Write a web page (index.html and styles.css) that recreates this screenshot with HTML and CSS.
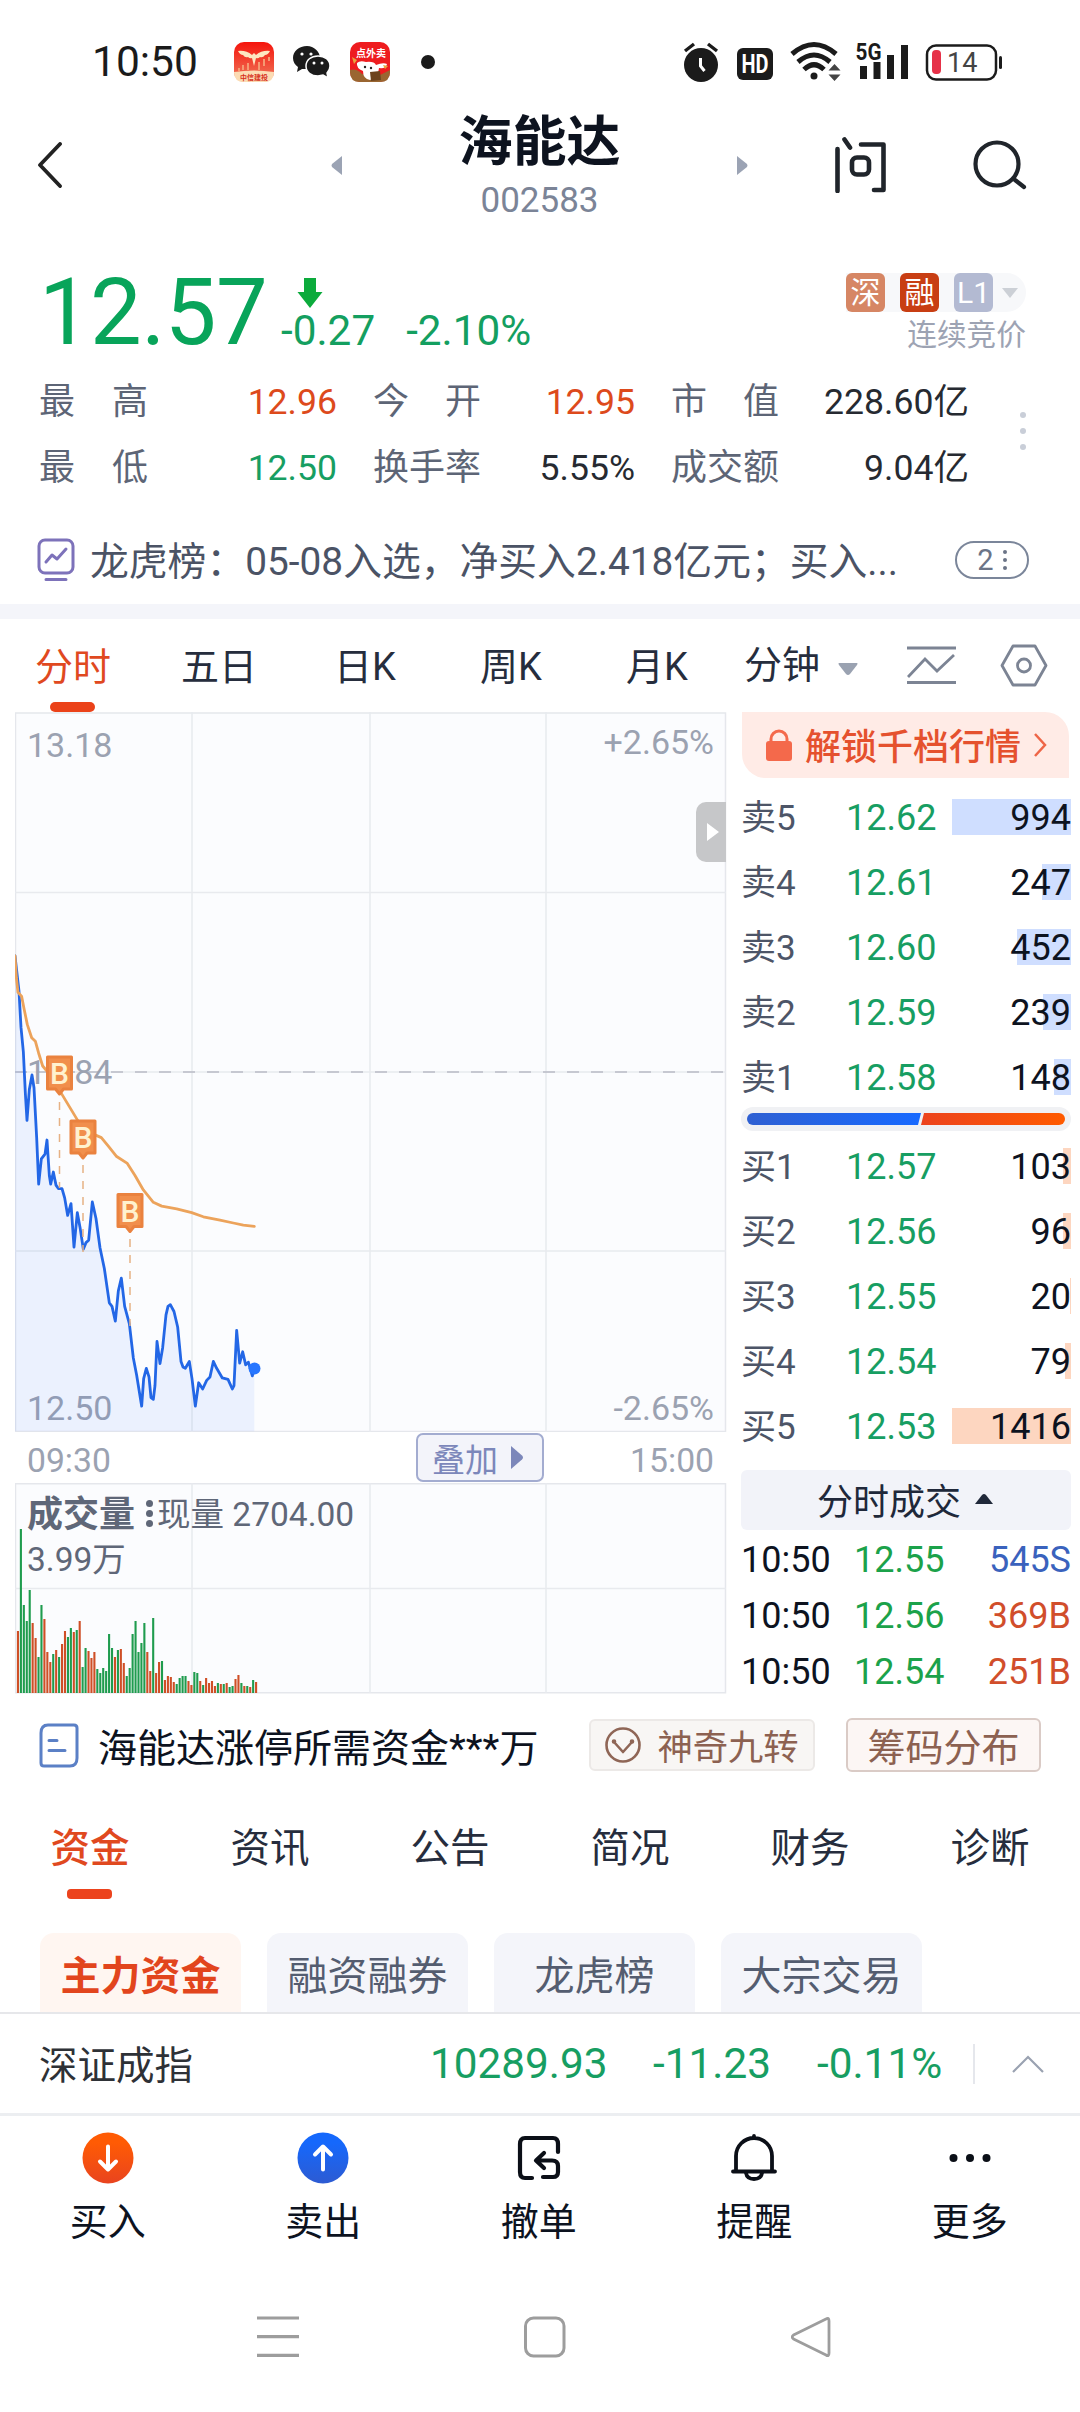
FILE: index.html
```html
<!DOCTYPE html>
<html lang="zh-CN">

<head>
    <meta charset="UTF-8">
    <meta name="viewport" content="width=device-width, initial-scale=1.0">
    <title>海能达 002583</title>

    <link rel="stylesheet" href="styles.css">
</head>

<body>
    <div class="app">

        <!-- Status bar -->
        <div class="status-bar">
            <div class="clock">10:50</div>
            <svg class="app-icon" width="40" height="40" viewBox="0 0 40 40">
                <defs>
                    <linearGradient id="redFade" x1="0" y1="0" x2="0" y2="1">
                        <stop offset="0" stop-color="#f5140c"/>
                        <stop offset="1" stop-color="#ee7b5d"/>
                    </linearGradient>
                </defs>
                <rect width="40" height="40" rx="10" fill="url(#redFade)"/>
                <path d="M0 30Q20 27 40 30Q40 40 30 40H10Q0 40 0 30Z" fill="#fbdcb4"/>
                <path d="M4 9Q12 8 18 13L20 11L22 13Q28 8 36 9Q34 13 31 13Q29 16 26 15Q24 17 22 16L20 24L18 16Q16 17 14 15Q11 16 9 13Q6 13 4 9Z" fill="#fde7c2"/>
                <path d="M5 26v3M9 23v5M14 21v7M25 20v8M30 17v7M35 15v4" stroke="#f59a72" stroke-width="2"/>
                <text x="20" y="37.5" font-size="7" font-weight="700" fill="#d7301c" text-anchor="middle">中信建投</text>
            </svg>
            <svg class="app-icon" width="38" height="32" viewBox="0 0 38 32">
                <path d="M14 0C6 0 0 5 0 12c0 4 2 7 5 9l-1 5 5-3h5C21 23 27 18 27 12S21 0 14 0z" fill="#1b1b1b"/>
                <path d="M25 10c-7 0-12 4-12 10s5 10 12 10l5-1 5 3-1-5c2-2 3-4 3-7 0-6-5-10-12-10z" fill="#1b1b1b" stroke="#fff" stroke-width="1.5"/>
                <circle cx="9" cy="8" r="1.6" fill="#fff"/><circle cx="18" cy="8" r="1.6" fill="#fff"/>
                <circle cx="21" cy="17" r="1.5" fill="#fff"/><circle cx="29" cy="17" r="1.5" fill="#fff"/>
            </svg>
            <svg class="app-icon" width="40" height="40" viewBox="0 0 40 40">
                <rect width="40" height="40" rx="10" fill="#ee1c1f"/>
                <path d="M0 28Q7 26 12 32L28 34L40 28V30Q40 40 30 40H10Q0 40 0 30Z" fill="#9a6631"/>
                <path d="M7 21Q10 18 16 20Q24 19 26 23Q33 20 37 22Q36 27 29 26Q28 37 20 38Q13 37 13 29Q6 26 7 21Z" fill="#fff"/>
                <path d="M20 30l10-1 1 9-10 1z" fill="#6d431e"/>
                <path d="M2 15l5 3-3 4M33 23l5 1-3 3" fill="#e9a23c"/>
                <circle cx="15" cy="25" r="1.2" fill="#222"/><circle cx="21" cy="26" r="1.2" fill="#222"/>
                <text x="21" y="15" font-size="10" font-weight="700" fill="#fff" text-anchor="middle">点外卖</text>
            </svg>
            <div class="dot"></div>
            <svg class="status-right" width="330" height="44" viewBox="0 0 330 44">
                <!-- alarm -->
                <circle cx="18" cy="25" r="17" fill="#1b1b1b"/>
                <path d="M2 11L11 4M34 11L25 4" stroke="#1b1b1b" stroke-width="3.4"/>
                <path d="M17.5 18v8l4 5" fill="none" stroke="#fff" stroke-width="3"/>
                <!-- HD -->
                <rect x="54" y="8" width="36" height="32" rx="6" fill="#1b1b1b"/>
                <text x="72" y="33" font-size="25" font-weight="700" fill="#fff" text-anchor="middle" textLength="27" lengthAdjust="spacingAndGlyphs">HD</text>
                <!-- wifi -->
                <g fill="none" stroke="#1b1b1b" stroke-width="5">
                    <path d="M109 14Q131-5 153 14"/>
                    <path d="M115 22Q131 8 147 22"/>
                    <path d="M121 29.5Q131 20 141 29.5"/>
                </g>
                <circle cx="131" cy="36" r="3.5" fill="#1b1b1b"/>
                <path d="M145.5 30.500L151.500 24L157.500 30.500ZM145.500 34.500L151.500 41L157.500 34.500Z" fill="#444"/>
                <!-- signal -->
                <path d="M177 26h7v13h-7zM190.500 22h7v17h-7zM204 15h7v24h-7zM218 5h7v34h-7z" fill="#1b1b1b"/>
                <text x="172.500" y="20" font-size="23.500" font-weight="700" fill="#1b1b1b" textLength="26" lengthAdjust="spacingAndGlyphs">5G</text>
                <!-- battery -->
                <rect x="244" y="5.500" width="69" height="34" rx="9" fill="none" stroke="#1b1b1b" stroke-width="2.500"/>
                <rect x="316" y="16" width="3" height="13" rx="1.500" fill="#1b1b1b"/>
                <rect x="249" y="10" width="9" height="24" rx="4" fill="#e63148"/>
                <text x="264" y="32" font-size="27" fill="#444">14</text>
            </svg>
        </div>

        <!-- Stock title -->
        <div class="header">
            <svg class="back" width="26" height="46" viewBox="0 0 26 46"><path d="M23 2L3 23L23 44" fill="none" stroke="#222" stroke-width="3.8" stroke-linecap="round" stroke-linejoin="round"/></svg>
            <svg class="prev" width="11" height="19" viewBox="0 0 11 19"><path d="M11 0v19L1 11Q0 9.500 1 8z" fill="#9ba3b4"/></svg>
            <div class="title">
                <div class="name">海能达</div>
                <div class="code">002583</div>
            </div>
            <svg class="next" width="11" height="19" viewBox="0 0 11 19"><path d="M0 0v19L10 11Q11 9.500 10 8z" fill="#9ba3b4"/></svg>
            <svg class="ask" width="52" height="56" viewBox="0 0 52 56" fill="none" stroke="#20252b" stroke-width="4.600" stroke-linecap="round" stroke-linejoin="round">
                <path d="M2.500 12v42M9.500 2.500l5.500 8M26 7.500h22.500v45.500H39"/>
                <rect x="17" y="20.500" width="17" height="17" rx="5"/>
            </svg>
            <svg class="search" width="54" height="50" viewBox="0 0 54 50" fill="none" stroke="#20252b" stroke-width="4.200" stroke-linecap="round">
                <circle cx="24" cy="24" r="21.500"/><path d="M42 40L51 47"/>
            </svg>
        </div>

        <!-- Price -->
        <div class="quote">
            <div class="price">12.57</div>
            <div class="change">
                <svg width="26" height="32" viewBox="0 0 26 32"><path d="M7 1h12v14h6.500L13 31L.5 15H7z" fill="#0cab3c"/></svg>
                <div class="change-values"><span>-0.27</span><span>-2.10%</span></div>
            </div>
            <div class="market">
                <div class="tags">
                    <span class="tag tag-sz">深</span>
                    <span class="tag tag-rz">融</span>
                    <span class="tag tag-l1">L1</span>
                    <svg width="16" height="10" viewBox="0 0 16 10"><path d="M0 0h16L8 10z" fill="#ccd0d6"/></svg>
                </div>
                <div class="phase">连续竞价</div>
            </div>
        </div>

        <div class="stats">
            <div class="label"><span>最</span><span>高</span></div><div class="value red">12.96</div>
            <div class="label"><span>今</span><span>开</span></div><div class="value red">12.95</div>
            <div class="label"><span>市</span><span>值</span></div><div class="value">228.60亿</div>
            <div class="label"><span>最</span><span>低</span></div><div class="value green">12.50</div>
            <div class="label"><span>换</span><span>手</span><span>率</span></div><div class="value">5.55%</div>
            <div class="label"><span>成</span><span>交</span><span>额</span></div><div class="value">9.04亿</div>
            <div class="more-dots"><i></i><i></i><i></i></div>
        </div>

        <div class="notice">
            <svg width="38" height="44" viewBox="0 0 38 44" fill="none" stroke="#7d72ba" stroke-width="3" stroke-linecap="round" stroke-linejoin="round">
                <rect x="2" y="2" width="34" height="33" rx="6"/>
                <path d="M9 24L15 17L20 21L29 11M9 41.500h20"/>
            </svg>
            <div class="notice-text">龙虎榜：05-08入选，净买入2.418亿元；买入...</div>
            <div class="notice-count">2<span class="mini-dots"><i></i><i></i><i></i></span></div>
        </div>

        <div class="gap"></div>

        <!-- Period tabs -->
        <div class="periods">
            <div class="period active">分时</div>
            <div class="period">五日</div>
            <div class="period">日K</div>
            <div class="period">周K</div>
            <div class="period">月K</div>
            <div class="period minute">分钟<svg width="20" height="12" viewBox="0 0 20 12"><path d="M1 0h18q1 0 0 2l-7 9q-2 2-4 0L1 2Q0 0 1 0z" fill="#9aa2b1"/></svg></div>
            <svg class="line-icon" width="49" height="39" viewBox="0 0 49 39" fill="none" stroke="#7c8494" stroke-width="2.800"><path d="M0 2h49M0 36.500h49M1 31L18 13L30 25L47 9"/></svg>
            <svg class="hex-icon" width="48" height="43" viewBox="0 0 48 43" fill="none" stroke="#7c8494" stroke-width="2.800" stroke-linejoin="round"><path d="M13 2h22L46 21.500L35 41H13L2 21.500z"/><circle cx="24" cy="21.500" r="6.500"/></svg>
        </div>

        <div class="trading">
            <div class="charts">
                <!-- Minute chart -->
                <div class="price-chart">
                    <svg width="712" height="720" viewBox="0 0 712 720">
                        <rect x="0.500" y="1" width="710" height="718.500" fill="#fbfcfe" stroke="#e5e7ec" stroke-width="1.500"/>
                        <path d="M177 0V720M355 0V720M531 0V720M0 180.500H711M0 360H711M0 539H711" stroke="#e8eaee" stroke-width="1.500"/>
                        <path d="M0 360H711" stroke="#b9bcc6" stroke-width="1.500" stroke-dasharray="12 12"/>
                        <g class="chart-text">
                            <text x="12" y="45">13.18</text>
                            <text x="699" y="42" text-anchor="end">+2.65%</text>
                            <text x="12" y="372">12.84</text>
                            <text x="12" y="708">12.50</text>
                            <text x="699" y="708" text-anchor="end">-2.65%</text>
                        </g>
                        <g id="lines" transform="translate(-15 188) scale(.33333 .34435)"></g>
                        <circle cx="239.500" cy="656.500" r="6" fill="#2776ff"/>
                        <path d="M44.500 390V476M68 453V540M115 527V614" stroke="#e6b184" stroke-width="1.500" stroke-dasharray="8 8"/>
                        <g id="markers"></g>
                    </svg>
                    <div class="expand"><svg width="12" height="18" viewBox="0 0 12 18"><path d="M0 0L12 9L0 18z" fill="#fff"/></svg></div>
                </div>

                <div class="time-axis">
                    <span>09:30</span>
                    <div class="overlay-btn">叠加<svg width="12" height="23" viewBox="0 0 12 23"><path d="M0 0L11 9.500Q13 11.500 11 13.500L0 23z" fill="#7c87ba"/></svg></div>
                    <span>15:00</span>
                </div>

                <!-- Volume chart -->
                <div class="volume-chart">
                    <svg width="712" height="211" viewBox="0 0 712 211">
                        <rect x="0.500" y="0.750" width="710" height="209" fill="#fbfcfe" stroke="#e5e7ec" stroke-width="1.500"/>
                        <path d="M177 0V210M355 0V210M531 0V210M0 105.500H711" stroke="#e8eaee" stroke-width="1.500"/>
                        <g id="volume"></g>
                    </svg>
                    <div class="volume-legend">
                        <div class="volume-now"><b>成交量</b><span class="mini-dots bold"><i></i><i></i><i></i></span>现量 2704.00</div>
                        <div>3.99万</div>
                    </div>
                </div>
            </div>

            <!-- Order book -->
            <div class="book">
                <div class="unlock">
                    <svg width="26" height="33" viewBox="0 0 26 33"><path d="M5 15V10a8 8 0 0 1 16 0v5" fill="none" stroke="#f4694b" stroke-width="3"/><rect y="12" width="26" height="20" rx="3" fill="#f4694b"/></svg>
                    <span>解锁千档行情</span>
                    <svg width="14" height="24" viewBox="0 0 14 24"><path d="M2 1L12 12L2 23" fill="none" stroke="#ee6547" stroke-width="2.500"/></svg>
                </div>

                <div class="levels asks">
                    <div class="level"><span>卖5</span><span class="lv-price">12.62</span><span class="lv-vol"><i style="width:119px"></i>994</span></div>
                    <div class="level"><span>卖4</span><span class="lv-price">12.61</span><span class="lv-vol"><i style="width:29px"></i>247</span></div>
                    <div class="level"><span>卖3</span><span class="lv-price">12.60</span><span class="lv-vol"><i style="width:54px"></i>452</span></div>
                    <div class="level"><span>卖2</span><span class="lv-price">12.59</span><span class="lv-vol"><i style="width:28px"></i>239</span></div>
                    <div class="level"><span>卖1</span><span class="lv-price">12.58</span><span class="lv-vol"><i style="width:17px"></i>148</span></div>
                </div>

                <div class="ratio">
                    <svg width="318" height="12" viewBox="0 0 318 12">
                        <defs>
                            <linearGradient id="blueBar"><stop offset="0" stop-color="#2f60d2"/><stop offset="1" stop-color="#1769ff"/></linearGradient>
                            <linearGradient id="redBar"><stop offset="0" stop-color="#ec431d"/><stop offset="1" stop-color="#ff5b00"/></linearGradient>
                        </defs>
                        <path d="M6 0H174L171 12H6A6 6 0 0 1 6 0Z" fill="url(#blueBar)"/>
                        <path d="M177 0H312A6 6 0 0 1 312 12H174Z" fill="url(#redBar)"/>
                    </svg>
                </div>

                <div class="levels bids">
                    <div class="level"><span>买1</span><span class="lv-price">12.57</span><span class="lv-vol"><i style="width:8px"></i>103</span></div>
                    <div class="level"><span>买2</span><span class="lv-price">12.56</span><span class="lv-vol"><i style="width:8px"></i>96</span></div>
                    <div class="level"><span>买3</span><span class="lv-price">12.55</span><span class="lv-vol"><i style="width:1px"></i>20</span></div>
                    <div class="level"><span>买4</span><span class="lv-price">12.54</span><span class="lv-vol"><i style="width:6px"></i>79</span></div>
                    <div class="level"><span>买5</span><span class="lv-price">12.53</span><span class="lv-vol"><i style="width:119px"></i>1416</span></div>
                </div>

                <div class="deals-title">分时成交<svg width="18" height="10" viewBox="0 0 18 10"><path d="M0 10L7 1Q9-1 11 1L18 10z" fill="#20283a"/></svg></div>
                <div class="deal"><span>10:50</span><span class="deal-price">12.55</span><span class="deal-vol sell">545S</span></div>
                <div class="deal"><span>10:50</span><span class="deal-price">12.56</span><span class="deal-vol buy">369B</span></div>
                <div class="deal"><span>10:50</span><span class="deal-price">12.54</span><span class="deal-vol buy">251B</span></div>
            </div>
        </div>

        <div class="tips">
            <svg width="40" height="45" viewBox="0 0 40 45" fill="none" stroke="#5b80c6" stroke-width="3" stroke-linecap="round">
                <path d="M9 2H35Q38 2 38 5V35Q38 43 31 43H5Q2 43 2 40V10Q2 2 9 2Z"/><path d="M10 17.500h8M10 27.500h16"/>
            </svg>
            <div class="tips-text">海能达涨停所需资金***万</div>
            <div class="tool magic">
                <svg width="36" height="36" viewBox="0 0 36 36" fill="none" stroke="#8f6656" stroke-width="2.600" stroke-linecap="round" stroke-linejoin="round"><circle cx="18" cy="18" r="16.500"/><path d="M9 15L18 25L27 15"/><circle cx="9" cy="14.500" r="1"/><circle cx="27" cy="14.500" r="1"/></svg>
                <span>神奇九转</span>
            </div>
            <div class="tool chips-dist"><span>筹码分布</span></div>
        </div>

        <div class="sections">
            <div class="section active">资金</div>
            <div class="section">资讯</div>
            <div class="section">公告</div>
            <div class="section">简况</div>
            <div class="section">财务</div>
            <div class="section">诊断</div>
        </div>

        <div class="chips">
            <div class="chip active">主力资金</div>
            <div class="chip">融资融券</div>
            <div class="chip">龙虎榜</div>
            <div class="chip">大宗交易</div>
        </div>

        <div class="index-bar">
            <div class="index-name">深证成指</div>
            <div class="index-last">10289.93</div>
            <div class="index-diff">-11.23</div>
            <div class="index-rate">-0.11%</div>
            <div class="index-line"></div>
            <svg width="32" height="18" viewBox="0 0 32 18"><path d="M1 17L16 2L31 17" fill="none" stroke="#9aa2b1" stroke-width="2.200"/></svg>
        </div>

        <div class="actions">
            <div class="action">
                <svg width="52" height="52" viewBox="0 0 52 52"><defs><linearGradient id="buyFill" x1="0" y1="0" x2="0" y2="1"><stop offset=".2" stop-color="#ff5b04"/><stop offset="1" stop-color="#e9441f"/></linearGradient></defs><circle cx="26" cy="26" r="25.500" fill="url(#buyFill)"/><path d="M26 14.500V37M18 29.500L26 37.500L34 29.500" fill="none" stroke="#fff" stroke-width="4" stroke-linecap="round" stroke-linejoin="round"/></svg>
                买入
            </div>
            <div class="action">
                <svg width="52" height="52" viewBox="0 0 52 52"><defs><linearGradient id="sellFill" x1="0" y1="0" x2="0" y2="1"><stop offset=".2" stop-color="#1568fc"/><stop offset="1" stop-color="#2d5bd2"/></linearGradient></defs><circle cx="26" cy="26" r="25.500" fill="url(#sellFill)"/><path d="M26 37.500V15M18 22.500L26 14.500L34 22.500" fill="none" stroke="#fff" stroke-width="4" stroke-linecap="round" stroke-linejoin="round"/></svg>
                卖出
            </div>
            <div class="action">
                <svg width="52" height="52" viewBox="0 0 52 52" fill="none" stroke="#0b0f17" stroke-width="4.200" stroke-linecap="round" stroke-linejoin="round"><path d="M19 46H12Q7 46 7 40V12Q7 6 12 6H40Q45 6 45 12V20M31 21L23 28.500L31 36M24 28.500H39Q45 28.500 45 34V40Q45 45 40 45H30"/></svg>
                撤单
            </div>
            <div class="action">
                <svg width="52" height="52" viewBox="0 0 52 52" fill="none" stroke="#0b0f17" stroke-width="3.800" stroke-linecap="round"><path d="M8 38V24A18 18 0 0 1 44 24V38M5 39.500H47M26 4V6"/><path d="M18 41Q19 47 26 47T34 41"/></svg>
                提醒
            </div>
            <div class="action">
                <svg width="52" height="52" viewBox="0 0 52 52" fill="#0b0f17"><circle cx="9.500" cy="26" r="4"/><circle cx="26" cy="26" r="4"/><circle cx="42.500" cy="26" r="4"/></svg>
                更多
            </div>
        </div>

        <div class="nav-bar">
            <svg width="42" height="42" viewBox="0 0 42 42" stroke="#9d9d9d" stroke-width="3.200"><path d="M0 2h42M0 20.700h42M0 39.300h42"/></svg>
            <svg width="42" height="42" viewBox="0 0 42 42" fill="none" stroke="#9d9d9d" stroke-width="3"><rect x="1.500" y="2" width="38.500" height="38" rx="8"/></svg>
            <svg width="42" height="42" viewBox="0 0 42 42" fill="none" stroke="#9d9d9d" stroke-width="2.800" stroke-linejoin="round"><path d="M35 3Q38 1 38 5V37Q38 41 35 39L2.500 23Q0 21 2.500 19Z"/></svg>
        </div>
    </div>

    <script>

// minute prices
const price = "45,162 50,205 57,265 63,370 70,440 76,560 81,640 88,550 96,508 102,545 110,690 116,825 124,752 135,738 141,697 148,800 152,825 160,790 168,828 175,838 186,838 194,865 203,916 213,882 222,1008 232,908 240,950 250,1014 258,995 266,988 277,877 288,925 300,1010 313,1070 328,1170 336,1180 346,1223 355,1135 364,1098 374,1180 388,1230 400,1330 410,1380 425,1470 431,1390 439,1360 447,1385 453,1445 460,1450 465,1410 471,1282 480,1346 488,1300 498,1205 504,1180 511,1175 522,1195 533,1240 543,1340 549,1356 556,1360 568,1340 576,1390 586,1470 596,1402 608,1420 620,1395 630,1385 640,1340 650,1360 667,1388 684,1392 697,1420 702,1410 710,1250 719,1345 728,1312 737,1350 745,1342 757,1382 763,1360";

// average price
const average = "45,162 49,225 54,268 65,280 72,315 82,362 95,400 106,410 116,445 128,482 142,498 180,555 233,640 260,675 285,682 304,690 325,715 350,745 382,765 405,800 430,842 460,878 485,889 530,897 575,908 610,920 660,930 700,938 730,944 763,948";

document.getElementById('lines').innerHTML =
    `<polygon points="${price} 763,1543 45,1543" fill="#1769ff" fill-opacity="0.07"/>
     <polyline class="line" points="${price}" stroke="#2367e6"/>
     <polyline class="line" points="${average}" stroke="#eca35b"/>`;

// buy marks on the chart
const marks = [[44.5, 361], [68, 425], [115, 498.5]];

document.getElementById('markers').innerHTML = marks.map(([x, y]) =>
    `<path d="M${x - 12} ${y - 16}h24v32h-8l-4 5l-4-5h-8z" fill="#f18f4c" stroke="#ea823f" stroke-width="3" stroke-linejoin="round"/>
     <text class="mark" x="${x}" y="${y + 11}">B</text>`).join('');

// volume per minute, r = up, g = down
const volume = "62r 164g 88g 72g 103g 70r 55r 36g 88g 74r 41r 31r 39g 43r 36g 49r 62r 56g 65g 61r 63g 72r 26g 45g 42r 35r 41r 24g 20g 25g 22g 59g 45g 36r 43g 44r 30r 17g 25g 59g 72g 41g 50g 70g 41r 22r 75g 20r 31r 32g 13r 17r 16r 11r 9g 15g 17g 17g 12r 8r 21g 20g 12r 8g 15r 10r 12r 7r 10g 9r 9g 10r 6g 7g 14r 18r 10g 7r 7g 6r 13g 11r";

document.getElementById('volume').innerHTML = volume.split(' ').map((v, i) => {
    const h = parseInt(v);
    const color = v.endsWith('r') ? '#cf4f26' : '#1f9c4e';
    return `<rect x="${(1.9 + i * 2.94).toFixed(2)}" y="${210 - h}" width="2.1" height="${h}" fill="${color}"/>`;
}).join('');

    </script>
</body>

</html>
```
FILE: styles.css
```css
* {
    margin: 0;
    padding: 0;
    box-sizing: border-box;
}

body {
    width: 1080px;
    background-color: #fff;
    color: #0d131f;
    font-family: Roboto, "Noto Sans CJK SC", sans-serif;
}

svg {
    display: block;
    flex-shrink: 0;
}

.app {
    width: 1080px;
    height: 2412px;
    overflow: hidden;
}

/* status bar */
.status-bar {
    display: flex;
    align-items: center;
    height: 110px;
    padding: 13px 66px 0 92px;
}

.clock {
    width: 142px;
    font-size: 42.5px;
    color: #1b1b1b;
}

.app-icon {
    margin-right: 19px;
}

.dot {
    width: 14px;
    height: 14px;
    margin-left: 12px;
    border-radius: 50%;
    background-color: #1b1b1b;
}

.status-right {
    margin-left: auto;
    margin-right: 1px;
}

/* header */
.header {
    display: flex;
    align-items: center;
    height: 130px;
    padding: 0 53px 20px 37px;
}

.prev {
    margin-left: 268px;
}

.title {
    width: 395px;
    padding-top: 5px;
    text-align: center;
}

.name {
    font-size: 54px;
    font-weight: 700;
    line-height: 58px;
}

.code {
    font-size: 35px;
    line-height: 40px;
    margin-top: 9px;
    color: #7b8497;
}

.ask {
    margin-left: 87px;
}

.search {
    margin-left: auto;
}

/* price */
.quote {
    display: flex;
    height: 132px;
    padding: 0 54px 0 39px;
}

.price {
    width: 242px;
    padding-top: 19px;
    font-size: 92px;
    line-height: 108px;
    letter-spacing: -0.6px;
    color: #08a45a;
}

.change {
    padding-top: 37px;
    color: #149f60;
}

.change svg {
    margin-left: 16px;
}

.change-values {
    display: flex;
    gap: 31px;
    font-size: 42.3px;
    line-height: 44px;
}

.market {
    margin-left: auto;
    padding-top: 33px;
}

.tags {
    display: flex;
    align-items: center;
    width: 180px;
    height: 39px;
    gap: 15px;
    border-radius: 0 20px 20px 0;
    background-color: #f7f8fa;
}

.tags svg {
    margin-left: -6px;
}

.tag {
    width: 39px;
    height: 39px;
    border-radius: 6px;
    font-size: 30px;
    line-height: 39px;
    text-align: center;
    color: #fff;
}

.tag-sz {
    background-color: #d68664;
}

.tag-rz {
    background-color: #c83e13;
}

.tag-l1 {
    background-color: #b3bad2;
}

.phase {
    font-size: 29.7px;
    line-height: 46px;
    text-align: right;
    color: #9da3b3;
}

.stats {
    position: relative;
    display: grid;
    grid-template-columns: 109px 189px 36px 108px 154px 36px 108px 190px;
    grid-auto-rows: 66px;
    height: 147px;
    padding-left: 39px;
    font-size: 36px;
    line-height: 61px;
}

.label {
    display: flex;
    justify-content: space-between;
    color: #5d6576;
}

/* the label/value pairs sit in columns 1-2, 4-5 and 7-8 */
.label:nth-of-type(6n + 3) {
    grid-column: 4;
}

.label:nth-of-type(6n + 5) {
    grid-column: 7;
}

.value {
    text-align: right;
    font-size: 35.6px;
    line-height: 60px;
    color: #262a31;
}

.value.red {
    color: #dd4a1c;
}

.value.green {
    color: #179e62;
}

.more-dots {
    position: absolute;
    top: 40px;
    left: 1020px;
    display: flex;
    flex-direction: column;
    gap: 10px;
}

.more-dots i {
    width: 6px;
    height: 6px;
    border-radius: 50%;
    background-color: #c9ced8;
}

.notice {
    display: flex;
    align-items: center;
    height: 85px;
    padding: 0 51px 4px 37px;
}

.notice-text {
    margin-left: 15px;
    padding-bottom: 4px;
    font-size: 38.8px;
    white-space: nowrap;
    color: #4b5365;
}

.notice-count {
    display: flex;
    align-items: center;
    justify-content: center;
    gap: 9px;
    width: 74px;
    height: 38px;
    margin-left: auto;
    border: 2.5px solid #7b869a;
    border-radius: 19px;
    font-size: 29px;
    color: #6b7487;
}

.mini-dots {
    display: flex;
    flex-direction: column;
    gap: 4px;
}

.mini-dots i {
    width: 4px;
    height: 4px;
    border-radius: 50%;
    background-color: #6b7487;
}

.mini-dots.bold {
    gap: 3px;
    margin: 0 4px 0 11px;
    padding-bottom: 3px;
}

.mini-dots.bold i {
    width: 7px;
    height: 7px;
    background-color: #5f6778;
}

.gap {
    height: 15px;
    background-color: #f4f5fa;
}

/* period tabs */
.periods {
    display: flex;
    height: 93px;
    padding-right: 32px;
    font-size: 38px;
    line-height: 97px;
    color: #262d3d;
}

.period {
    position: relative;
    width: 146px;
    text-align: center;
}

.period.active {
    color: #e0491f;
}

.period.active::after {
    content: "";
    position: absolute;
    left: 50px;
    bottom: 0;
    width: 45px;
    height: 10px;
    border-radius: 5px;
    background-color: #eb4219;
}

.period.minute {
    display: flex;
    align-items: center;
    width: 162px;
    padding-left: 14px;
    gap: 18px;
}

.period.minute svg {
    margin-top: 7px;
}

.line-icon {
    margin: 27px 0 0 15px;
}

.hex-icon {
    margin: 25px 0 0 auto;
}

/* charts */
.trading {
    display: flex;
    height: 982px;
    padding-left: 15px;
}

.charts {
    width: 712px;
}

.price-chart {
    position: relative;
    height: 720px;
}

.chart-text {
    font-size: 34px;
    fill: #9ba2b1;
}

.line {
    fill: none;
    stroke-width: 2.8px;
    stroke-linejoin: round;
    stroke-linecap: round;
    vector-effect: non-scaling-stroke;
}

.mark {
    font-size: 30px;
    font-weight: 500;
    text-anchor: middle;
    fill: #fff2cf;
}

.expand {
    position: absolute;
    top: 90px;
    right: 1px;
    display: flex;
    align-items: center;
    justify-content: center;
    width: 30px;
    height: 60px;
    padding-left: 4px;
    border-radius: 10px 0 0 10px;
    background-color: #c6c7c9;
}

.time-axis {
    display: flex;
    align-items: center;
    height: 51px;
    padding: 0 13px 0 12px;
    font-size: 33.7px;
    color: #9ba2b1;
}

.time-axis span {
    padding-top: 5px;
}

.overlay-btn {
    display: flex;
    align-items: center;
    gap: 13px;
    width: 128px;
    height: 49px;
    margin: 0 86px 0 auto;
    padding-left: 14px;
    border: 2px solid #a3acd0;
    border-radius: 7px;
    font-size: 33px;
    color: #7c87ba;
    background-color: #f3f4fa;
}

.volume-chart {
    position: relative;
    height: 211px;
}

.volume-legend {
    position: absolute;
    top: 9px;
    left: 12px;
    font-size: 33.5px;
    line-height: 44px;
    color: #5f6778;
}

.volume-now {
    display: flex;
    align-items: center;
    height: 46px;
}

.volume-now b {
    font-size: 36px;
}

/* order book */
.book {
    width: 330px;
    margin-left: 14px;
}

.unlock {
    display: flex;
    align-items: center;
    height: 66px;
    margin: 0 2px 0 1px;
    padding-left: 24px;
    border-radius: 0 24px 0 24px;
    font-size: 36px;
    font-weight: 500;
    color: #e5512e;
    background-color: #ffebe6;
}

.unlock span {
    margin: 0 12px 2px 13px;
}

.levels {
    font-size: 36px;
    line-height: 39px;
}

.asks {
    padding-top: 21px;
}

.bids {
    padding-top: 17px;
}

.level {
    display: flex;
    height: 65px;
    color: #4d5567;
}

.level span:first-child {
    width: 105px;
    font-size: 35px;
}

.level .lv-price {
    color: #179e62;
}

.lv-vol {
    position: relative;
    z-index: 0;
    flex: 1;
    text-align: right;
    color: #0d131f;
}

.lv-vol i {
    position: absolute;
    z-index: -1;
    top: 0;
    right: 0;
    height: 36px;
    background-color: #cfdeff;
}

.bids .lv-vol i {
    background-color: #fdd6c0;
}

.ratio {
    height: 24px;
    margin-top: -17px;
    padding: 6px;
    border-radius: 12px;
    background-color: #f0f1f4;
}

.deals-title {
    display: flex;
    align-items: center;
    justify-content: center;
    gap: 14px;
    height: 60px;
    margin: -3px 0 2px;
    padding: 0 2px 2px 0;
    border-radius: 6px;
    font-size: 36px;
    color: #20283a;
    background-color: #f2f3f9;
}

.deal {
    display: flex;
    height: 56px;
    font-size: 36px;
    line-height: 56px;
}

.deal span:first-child {
    width: 113px;
}

.deal-price {
    color: #1ba24a;
}

.deal-vol {
    margin-left: auto;
}

.sell {
    color: #3a62bd;
}

.buy {
    color: #d14e2b;
}

/* tips row */
.tips {
    display: flex;
    align-items: center;
    height: 104px;
    padding: 0 39px 2px 39px;
}

.tips-text {
    margin-left: 19px;
    font-size: 39px;
    white-space: nowrap;
}

.tool {
    display: flex;
    align-items: center;
    justify-content: center;
    border-radius: 6px;
    color: #8c6151;
}

.tool span {
    margin-bottom: 2px;
}

.magic {
    gap: 16px;
    width: 226px;
    height: 52px;
    margin-left: auto;
    border: 2px solid #ece9e7;
    font-size: 35.3px;
    background-color: #f8f6f4;
}

.chips-dist {
    width: 195px;
    height: 54px;
    margin-left: 31px;
    border: 2px solid #dacbc6;
    font-size: 38px;
    background-color: #fcf6f4;
}

.sections {
    display: flex;
    height: 135px;
    font-size: 39.5px;
    line-height: 101px;
    color: #262d3d;
}

.section {
    position: relative;
    width: 180px;
    text-align: center;
}

.section.active {
    font-weight: 500;
    color: #e0491f;
}

.section.active::after {
    content: "";
    position: absolute;
    left: 67px;
    top: 91px;
    width: 45px;
    height: 10px;
    border-radius: 4px;
    background-color: #ec431d;
}

.chips {
    display: flex;
    gap: 26px;
    height: 79px;
    padding-left: 40px;
    font-size: 40px;
    line-height: 88px;
    color: #545d70;
}

.chip {
    width: 201px;
    border-radius: 14px 14px 0 0;
    text-align: center;
    background-color: #f4f5fa;
}

.chip.active {
    font-weight: 700;
    color: #e2451d;
    background-color: #fff6f1;
}

/* index bar */
.index-bar {
    display: flex;
    align-items: center;
    height: 104px;
    padding-left: 39px;
    border-top: 2px solid #e6e7ea;
    border-bottom: 3px solid #eceef1;
    font-size: 42.3px;
    color: #179e62;
}

.index-name {
    width: 391px;
    padding-bottom: 4px;
    font-size: 38.5px;
    color: #2e3136;
}

.index-last {
    width: 223px;
}

.index-diff {
    width: 164px;
}

.index-rate {
    width: 156px;
}

.index-line {
    width: 2px;
    height: 40px;
    margin-right: 37px;
    background-color: #e5e7ec;
}

.actions {
    display: flex;
    height: 174px;
    padding-top: 16px;
}

.action {
    display: flex;
    flex-direction: column;
    align-items: center;
    gap: 12px;
    width: 215.5px;
    font-size: 38px;
    line-height: 52px;
}

.nav-bar {
    display: flex;
    padding: 26px 0 0 257px;
    gap: 225px;
}
```
